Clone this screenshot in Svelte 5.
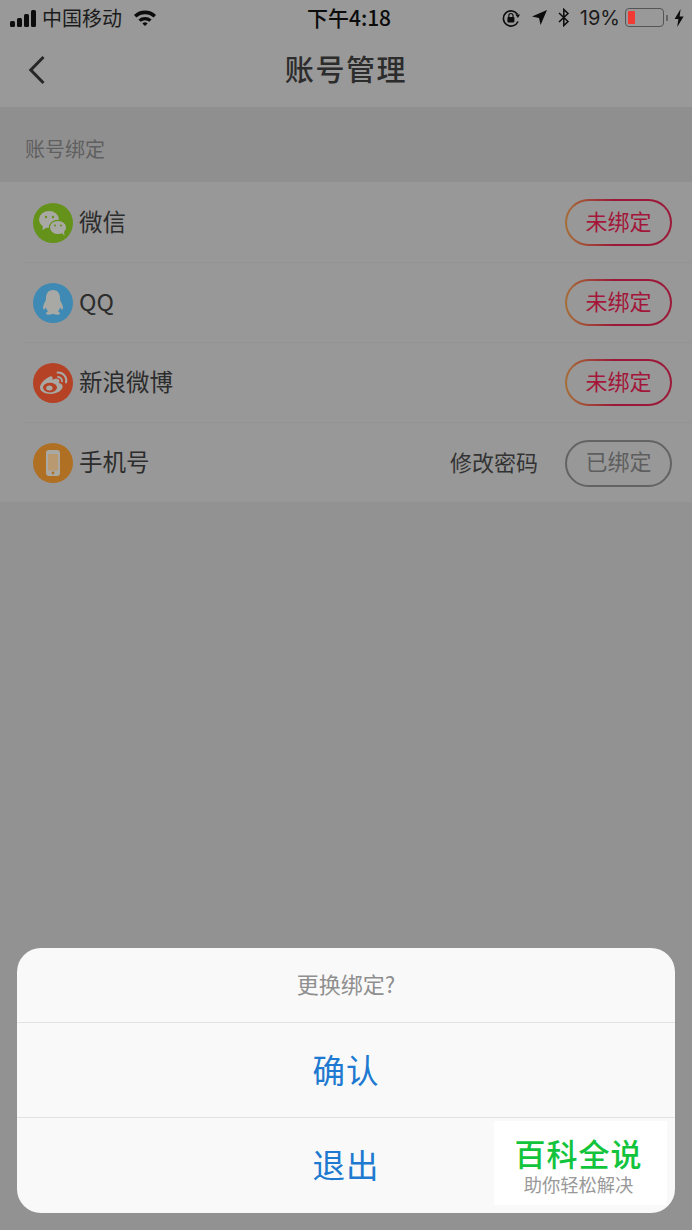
<script lang="ts">
  const accounts = [
    { name: '微信', kind: 'wechat', color: '#65921a' },
    { name: 'QQ', kind: 'qq', color: '#3f8ab4' },
    { name: '新浪微博', kind: 'weibo', color: '#b54224' },
    { name: '手机号', kind: 'phone', color: '#b07024', bound: true }
  ];
  const glyph = '#a8a8a4';
</script>

<div class="page">
  <header class="top">
    <div class="status">
      <div class="status-left">
        <span class="signal"><i></i><i></i><i></i><i></i></span>
        <span class="carrier">中国移动</span>
        <svg class="wifi" width="24" height="17" viewBox="0 0 24 17">
          <path d="M1 6 A16 16 0 0 1 23 6 L20.6 8.6 A12.6 12.6 0 0 0 3.4 8.6 Z" fill="#0c0c0c" />
          <path d="M5.4 10.4 A10 10 0 0 1 18.6 10.4 L16.3 12.8 A6.6 6.6 0 0 0 7.7 12.8 Z" fill="#0c0c0c" />
          <path d="M9.4 14.4 A4 4 0 0 1 14.6 14.4 L12 17 Z" fill="#0c0c0c" />
        </svg>
      </div>
      <div class="time">下午4:18</div>
      <div class="status-right">
        <svg width="20" height="20" viewBox="0 0 20 20">
          <path d="M16.5 6.5 A7.6 7.6 0 1 0 17 13.5" fill="none" stroke="#0c0c0c" stroke-width="1.6" />
          <path d="M14.4 6.6 L19 6.6 L17 10 Z" fill="#0c0c0c" />
          <rect x="6.4" y="9" width="7" height="5.4" rx="0.8" fill="#0c0c0c" />
          <path d="M7.8 9 V7.6 A2.1 2.1 0 0 1 12 7.6 V9" fill="none" stroke="#0c0c0c" stroke-width="1.2" />
        </svg>
        <svg class="loc" width="17" height="17" viewBox="0 0 17 17">
          <path d="M16 1 L9.6 16 L8 9 L1 7.6 Z" fill="#0c0c0c" />
        </svg>
        <svg class="bt" width="12" height="19" viewBox="0 0 12 19">
          <path d="M1 5 L10 13.5 L5.8 17.6 V1.4 L10 5.5 L1 14" fill="none" stroke="#0c0c0c" stroke-width="1.5" />
        </svg>
        <span class="pct">19%</span>
        <span class="battery"><b></b></span>
        <span class="nub"></span>
        <svg class="bolt" width="10" height="18" viewBox="0 0 10 18">
          <path d="M6.6 0 L0.6 10 H4.4 L3.2 18 L9.6 7.4 H5.6 Z" fill="#0c0c0c" />
        </svg>
      </div>
    </div>
    <nav class="nav">
      <svg class="back" width="18" height="30" viewBox="0 0 18 30">
        <path d="M15.5 2 L2.8 15 L15.5 28" fill="none" stroke="#262626" stroke-width="3" />
      </svg>
      <h1>账号管理</h1>
    </nav>
  </header>

  <div class="section">账号绑定</div>

  <ul class="list">
    {#each accounts as a}
      <li>
        <div class="row">
          <span class="icon" style="background: {a.color}">
            {#if a.kind === 'wechat'}
              <svg width="40" height="40" viewBox="0 0 40 40">
                <ellipse cx="16" cy="16.5" rx="10" ry="8.5" fill={glyph} />
                <path d="M10 22 L9.5 27 L15 24 Z" fill={glyph} />
                <ellipse cx="25" cy="24.5" rx="8.6" ry="7.2" fill={glyph} stroke={a.color} stroke-width="1.2" />
                <path d="M29 30 L31.5 33 L31 28 Z" fill={glyph} />
                <circle cx="13" cy="14" r="1.2" fill={a.color} />
                <circle cx="20" cy="14" r="1.2" fill={a.color} />
                <circle cx="22" cy="22.5" r="1.1" fill={a.color} />
                <circle cx="28" cy="22.5" r="1.1" fill={a.color} />
              </svg>
            {:else if a.kind === 'qq'}
              <svg width="40" height="40" viewBox="0 0 40 40">
                <path d="M20 7 C14.6 7 13 11.4 13 15 C13 17 12.6 18 11.4 20 C10 22.6 9.6 25.6 10.6 26.4 C11.4 26.8 12.4 25.4 13 24.6 C13.4 26.4 14.2 27.6 15 28.4 C13.4 29 12.6 30 13.2 31 C14 32 17.6 32 20 30.8 C22.4 32 26 32 26.8 31 C27.4 30 26.6 29 25 28.4 C25.8 27.6 26.6 26.4 27 24.6 C27.6 25.4 28.6 26.8 29.4 26.4 C30.4 25.6 30 22.6 28.6 20 C27.4 18 27 17 27 15 C27 11.4 25.4 7 20 7 Z" fill={glyph} />
              </svg>
            {:else if a.kind === 'weibo'}
              <svg width="40" height="40" viewBox="0 0 40 40">
                <path d="M17 13.5 C11.5 16 7 20.6 7 24.6 C7 28.6 12 31 17.4 31 C24 31 29.6 27.4 29.6 23.6 C29.6 21.4 27.6 20.4 26 20 C26.8 18 26.4 16.6 25 16 C23.4 15.4 21 16 19.4 16.8 C20 14.6 19.4 12.6 17 13.5 Z" fill={glyph} />
                <ellipse cx="17" cy="24.6" rx="7" ry="4.8" fill={a.color} />
                <ellipse cx="16.4" cy="25" rx="3.2" ry="2.5" fill={glyph} />
                <path d="M24.6 9.6 A8 8 0 0 1 33 19.6" fill="none" stroke={glyph} stroke-width="2" stroke-linecap="round" />
                <path d="M25 14 A4 4 0 0 1 29 18.4" fill="none" stroke={glyph} stroke-width="1.8" stroke-linecap="round" />
              </svg>
            {:else}
              <svg width="40" height="40" viewBox="0 0 40 40">
                <rect x="13" y="7" width="14" height="26" rx="3" fill={glyph} />
                <rect x="15" y="11" width="10" height="16.5" fill="#b99a70" />
                <circle cx="20" cy="30" r="1.4" fill={a.color} />
              </svg>
            {/if}
          </span>
          <span class="name">{a.name}</span>
          <span class="spacer"></span>
          {#if a.bound}
            <span class="link">修改密码</span>
            <span class="pill bound">已绑定</span>
          {:else}
            <span class="pill">未绑定</span>
          {/if}
        </div>
      </li>
    {/each}
  </ul>

  <div class="sheet">
    <div class="sheet-title">更换绑定?</div>
    <div class="sheet-btn">确认</div>
    <div class="sheet-btn">退出</div>
  </div>

  <div class="mark">
    <div class="mark-title">百科全说</div>
    <div class="mark-sub">助你轻松解决</div>
  </div>
</div>

<style>
  :global(body) {
    margin: 0;
  }

  .page {
    position: relative;
    width: 692px;
    height: 1230px;
    overflow: hidden;
    background: #929292;
    font-family: "Noto Sans CJK SC", "Liberation Sans", sans-serif;
    color: #0c0c0c;
  }

  .top {
    height: 107px;
    background: #999;
  }

  .status {
    height: 35px;
    display: grid;
    grid-template-columns: 1fr auto 1fr;
    align-items: center;
    padding: 0 8px 0 10px;
  }

  .status-left {
    display: flex;
    align-items: center;
  }

  .signal {
    display: flex;
    align-items: flex-end;
    gap: 2px;
    height: 17px;
    margin-top: 1px;
  }

  .signal i {
    display: block;
    width: 5px;
    border-radius: 1.5px;
    background: #0c0c0c;
  }

  .signal i:nth-child(1) { height: 6px; }
  .signal i:nth-child(2) { height: 9px; }
  .signal i:nth-child(3) { height: 13px; }
  .signal i:nth-child(4) { height: 17px; }

  .carrier {
    margin-left: 6px;
    font-size: 20px;
    line-height: 24px;
    color: #1c1c1c;
  }

  .wifi {
    margin-left: 11px;
  }

  .time {
    padding: 0 0 2px 4px;
    font-size: 21px;
    font-weight: 500;
    line-height: 24px;
  }

  .status-right {
    display: flex;
    align-items: center;
    justify-content: flex-end;
  }

  .loc {
    margin-left: 10px;
  }

  .bt {
    margin-left: 10px;
  }

  .pct {
    margin-left: 10px;
    font-family: "Inter", sans-serif;
    font-size: 20px;
    line-height: 24px;
    color: #1c1c1c;
  }

  .battery {
    display: block;
    box-sizing: border-box;
    width: 39px;
    height: 19px;
    margin-left: 5px;
    padding: 2px;
    border: 1.5px solid #555;
    border-radius: 4px;
  }

  .battery b {
    display: block;
    width: 7px;
    height: 100%;
    border-radius: 1px;
    background: #f23a34;
  }

  .nub {
    width: 2px;
    height: 6px;
    margin-left: 2px;
    background: #666;
  }

  .bolt {
    margin-left: 6px;
  }

  .nav {
    position: relative;
    box-sizing: border-box;
    height: 72px;
    padding-bottom: 6px;
    display: flex;
    align-items: center;
    justify-content: center;
  }

  .back {
    position: absolute;
    left: 28px;
    top: 20px;
  }

  .nav h1 {
    margin: 0;
    font-size: 29px;
    font-weight: 500;
    line-height: 40px;
    color: #2c2c2c;
    letter-spacing: 1.6px;
  }

  .section {
    box-sizing: border-box;
    height: 75px;
    padding: 8px 0 0 25px;
    display: flex;
    align-items: center;
    background: #8f8f8f;
    font-size: 20px;
    color: #5f5f5f;
  }

  .list {
    margin: 0;
    padding: 1px 0 0;
    list-style: none;
    background: #989898;
  }

  .list li {
    height: 80px;
    padding-left: 23px;
  }

  .list li:last-child {
    height: 79px;
  }

  .row {
    box-sizing: border-box;
    height: 80px;
    padding: 0 20px 0 10px;
    display: flex;
    align-items: center;
    border-bottom: 1px solid #939393;
  }

  .list li:last-child .row {
    border-bottom: none;
  }

  .icon {
    width: 40px;
    height: 40px;
    border-radius: 50%;
    flex: none;
    overflow: hidden;
  }

  .icon svg {
    display: block;
  }

  .name {
    margin-left: 6px;
    padding-bottom: 4px;
    font-size: 23.5px;
    line-height: 32px;
    color: #2c2c2c;
  }

  .spacer {
    flex: 1;
  }

  .link {
    margin-right: 27px;
    padding-bottom: 4px;
    font-size: 22px;
    color: #333;
  }

  .pill {
    box-sizing: border-box;
    width: 107px;
    height: 47px;
    padding-bottom: 6px;
    border: 2px solid transparent;
    border-radius: 24px;
    display: flex;
    align-items: center;
    justify-content: center;
    font-size: 22px;
    color: #a3163a;
    background:
      linear-gradient(#989898, #989898) padding-box,
      linear-gradient(90deg, #a66e36, #9c1838 45%, #9c1838) border-box;
  }

  .pill.bound {
    color: #5e5e5e;
    background: none;
    border-color: #636363;
  }

  .sheet {
    position: absolute;
    left: 17px;
    top: 948px;
    width: 658px;
    height: 265px;
    display: flex;
    flex-direction: column;
    border-radius: 24px;
    background: #f9f9f9;
    overflow: hidden;
  }

  .sheet-title {
    box-sizing: border-box;
    height: 74px;
    flex: none;
    padding-bottom: 4px;
    display: flex;
    align-items: center;
    justify-content: center;
    font-size: 22px;
    color: #8f8f8f;
  }

  .sheet-btn {
    box-sizing: border-box;
    height: 95px;
    flex: none;
    padding-bottom: 4px;
    display: flex;
    align-items: center;
    justify-content: center;
    border-top: 1px solid #e2e2e2;
    font-size: 32.5px;
    color: #2079d0;
    letter-spacing: 1px;
  }

  .sheet-btn:last-child {
    height: 96px;
  }

  .mark {
    position: absolute;
    left: 494px;
    top: 1121px;
    box-sizing: border-box;
    width: 173px;
    height: 84px;
    padding-right: 4px;
    background: #fff;
    text-align: center;
  }

  .mark-title {
    margin-top: 14px;
    font-size: 31px;
    font-weight: 500;
    line-height: 36px;
    color: #12c43c;
    letter-spacing: 1px;
  }

  .mark-sub {
    margin-top: 1px;
    font-size: 18.3px;
    line-height: 24px;
    color: #999;
  }
</style>
